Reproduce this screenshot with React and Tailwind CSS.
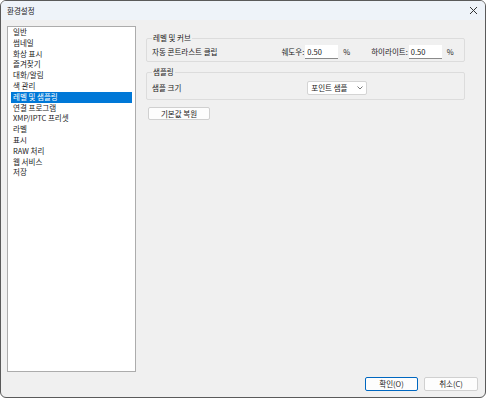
import React from 'react';

const font = { fontFamily: '"Noto Sans CJK KR", "Noto Sans", sans-serif' };

const menuItems = [
  '일반',
  '썸네일',
  '화상 표시',
  '즐겨찾기',
  '대화/알림',
  '색 관리',
  '레벨 및 샘플링',
  '연결 프로그램',
  'XMP/IPTC 프리셋',
  '라벨',
  '표시',
  'RAW 처리',
  '웹 서비스',
  '저장',
];

function GroupBox({ title, children, className = '' }) {
  return (
    <fieldset className={`border border-[#dcdcdc] rounded-[2px] px-[4px] ${className}`}>
      <legend className="ml-[1px] px-[1px] leading-[10px]">{title}</legend>
      {children}
    </fieldset>
  );
}

function NumberInput({ value }) {
  return (
    <div className="w-[33px] h-[14px] bg-white border-b border-[#8a8a8a] pl-[2px] flex items-center leading-none">
      {value}
    </div>
  );
}

export default function App() {
  return (
    <div className="w-[486px] h-[398px] bg-white">
      <div
        className="w-full h-full flex flex-col border border-[#5a5a5a] rounded-[6px] overflow-hidden bg-[#f0f0f0] text-[7.5px] text-[#1a1a1a]"
        style={font}
      >
        {/* Title bar */}
        <div className="h-[19px] shrink-0 bg-[#eef3f9] flex items-center justify-between pl-[6px] pr-[7px]">
          <span className="text-[7.5px] text-[#222]">환경설정</span>
          <svg width="9" height="9" viewBox="0 0 9 9" className="text-[#333]">
            <path d="M1 1 L8 8 M8 1 L1 8" stroke="currentColor" strokeWidth="1" />
          </svg>
        </div>

        {/* Body */}
        <div className="flex-1 flex flex-col pl-[6px] pr-[7px] pt-[6px] pb-[7px]">
          <div className="flex flex-1">
            {/* Category list */}
            <div className="w-[129px] h-[346px] bg-white border border-[#acacac] pt-[0px] px-[3px]">
              {menuItems.map((item) => (
                <div
                  key={item}
                  className={`h-[10.8px] leading-[10.8px] pl-[2px] ${
                    item === '레벨 및 샘플링' ? 'bg-[#0078d7] text-white' : ''
                  }`}
                >
                  {item}
                </div>
              ))}
            </div>

            {/* Settings panel */}
            <div className="ml-[10px] w-[319px] flex flex-col pt-[7px]">
              <GroupBox title="레벨 및 커브" className="h-[29px]">
                <div className="flex items-center h-[19px] pb-[1px]">
                  <span className="ml-[1px]">자동 콘트라스트 클립</span>
                  <span className="ml-[64px]">쉐도우:</span>
                  <div className="ml-[1px]">
                    <NumberInput value="0.50" />
                  </div>
                  <span className="ml-[5px]">%</span>
                  <span className="ml-[21px]">하이라이트:</span>
                  <div className="ml-[1px]">
                    <NumberInput value="0.50" />
                  </div>
                  <span className="ml-[5px]">%</span>
                </div>
              </GroupBox>

              <GroupBox title="샘플링" className="h-[33px] mt-[5px]">
                <div className="flex items-center h-[22px]">
                  <span className="ml-[1px]">샘플 크기</span>
                  <div className="ml-[126px] w-[60px] h-[14px] bg-white border border-[#d4d4d4] rounded-[2px] flex items-center justify-between pl-[3px] pr-[3px]">
                    <span>포인트 샘플</span>
                    <svg width="6" height="4" viewBox="0 0 6 4">
                      <path d="M0.5 0.5 L3 3 L5.5 0.5" fill="none" stroke="#555" strokeWidth="0.8" />
                    </svg>
                  </div>
                </div>
              </GroupBox>

              <button className="mt-[7px] ml-[2px] w-[62px] h-[13px] bg-[#fdfdfd] border border-[#d0d0d0] rounded-[2px] flex items-center justify-center leading-none">
                기본값 복원
              </button>
            </div>
          </div>

          {/* Footer buttons */}
          <div className="flex justify-end gap-[6px] mt-[5px]">
            <button className="w-[53px] h-[14px] bg-[#fdfdfd] border border-[#0067c0] rounded-[2px] flex items-center justify-center leading-none">
              확인(O)
            </button>
            <button className="w-[54px] h-[14px] bg-[#fdfdfd] border border-[#d0d0d0] rounded-[2px] flex items-center justify-center leading-none">
              취소(C)
            </button>
          </div>
        </div>
      </div>
    </div>
  );
}
